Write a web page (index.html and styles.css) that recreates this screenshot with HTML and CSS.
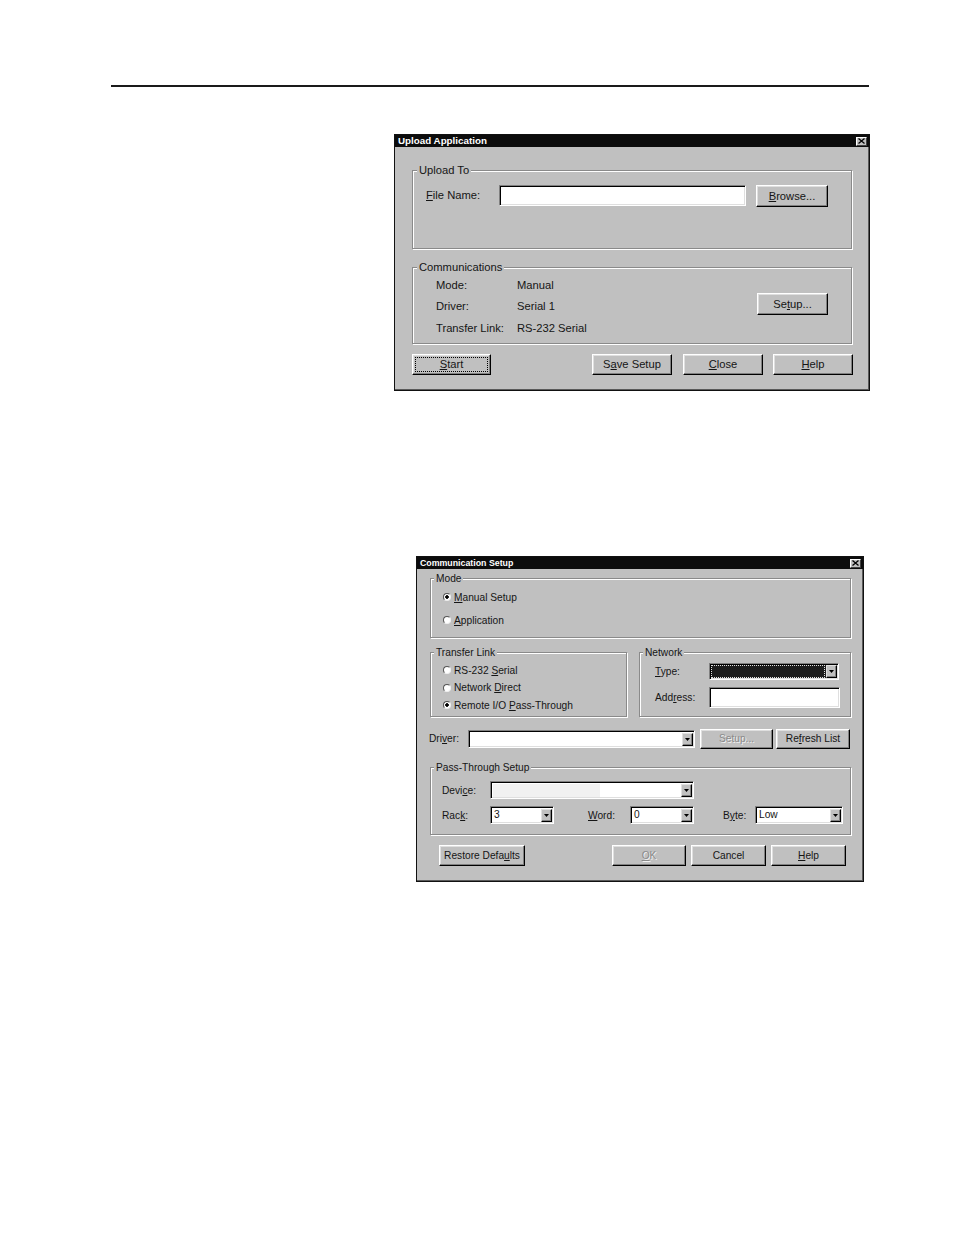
FILE: index.html
```html
<!DOCTYPE html>
<html>
<head>
<meta charset="utf-8">
<title>Upload Application</title>
<link rel="stylesheet" href="styles.css">
</head>
<body>
<div class="page">
  <div class="rule"></div>

  <div class="dlg dlg-upload">
    <div class="titlebar">
      <span class="title t1">Upload Application</span>
      <span class="xbtn x1"><svg width="7" height="6" viewBox="0 0 7 6"><path d="M0.5 0.5L6.5 5.5M6.5 0.5L0.5 5.5" stroke="#000" stroke-width="1.3"/></svg></span>
    </div>
    <div class="body1">
      <div class="group g-upload">
        <div class="legend">Upload To</div>
        <div class="file-row">
          <span class="lbl-file"><u>F</u>ile Name:</span>
          <span class="edit file-edit"></span>
          <span class="btn btn-browse"><u>B</u>rowse...</span>
        </div>
      </div>

      <div class="group g-comm">
        <div class="legend">Communications</div>
        <div class="comm-body">
          <div class="info-grid">
            <span>Mode:</span><span>Manual</span>
            <span>Driver:</span><span>Serial 1</span>
            <span>Transfer Link:</span><span>RS-232 Serial</span>
          </div>
          <span class="btn btn-setup1">Se<u>t</u>up...</span>
        </div>
      </div>

      <div class="btnrow1">
        <span class="btn b1 focused"><u>S</u>tart</span>
        <div class="btn-right1">
          <span class="btn b1w">S<u>a</u>ve Setup</span>
          <span class="btn b1w g11"><u>C</u>lose</span>
          <span class="btn b1w g10"><u>H</u>elp</span>
        </div>
      </div>
    </div>
  </div>

  <div class="dlg dlg-comm">
    <div class="titlebar">
      <span class="title t2">Communication Setup</span>
      <span class="xbtn x2"><svg width="7" height="6" viewBox="0 0 7 6"><path d="M0.5 0.5L6.5 5.5M6.5 0.5L0.5 5.5" stroke="#000" stroke-width="1.3"/></svg></span>
    </div>
    <div class="body2">
      <div class="group2 g-mode">
        <div class="legend2">Mode</div>
        <div class="mode-radios">
          <div class="radio-row"><span class="radio checked"></span><span><u>M</u>anual Setup</span></div>
          <div class="radio-row r2"><span class="radio"></span><span><u>A</u>pplication</span></div>
        </div>
      </div>

      <div class="row-groups">
        <div class="group2 g-transfer">
          <div class="legend2">Transfer Link</div>
          <div class="transfer-radios">
            <div class="radio-row"><span class="radio"></span><span>RS-232 <u>S</u>erial</span></div>
            <div class="radio-row"><span class="radio"></span><span>Network <u>D</u>irect</span></div>
            <div class="radio-row"><span class="radio checked"></span><span>Remote I/O <u>P</u>ass-Through</span></div>
          </div>
        </div>
        <div class="group2 g-network">
          <div class="legend2">Network</div>
          <div class="net-row">
            <span class="net-lbl"><u>T</u>ype:</span>
            <span class="combo c-type"><span class="combo-text type-text"></span><span class="drop"><svg width="5" height="3" viewBox="0 0 5 3"><path d="M0 0h5L2.5 3z" fill="#000"/></svg></span></span>
          </div>
          <div class="net-row nr2">
            <span class="net-lbl">Add<u>r</u>ess:</span>
            <span class="edit addr-edit"></span>
          </div>
        </div>
      </div>

      <div class="driver-row">
        <span class="drv-lbl">Dri<u>v</u>er:</span>
        <span class="combo c-driver"><span class="combo-text"></span><span class="drop"><svg width="5" height="3" viewBox="0 0 5 3"><path d="M0 0h5L2.5 3z" fill="#000"/></svg></span></span>
        <span class="btn btn-setup2 disabled">Setup...</span>
        <span class="btn btn-refresh">Re<u>f</u>resh List</span>
      </div>

      <div class="group2 g-pass">
        <div class="legend2">Pass-Through Setup</div>
        <div class="pass-row">
          <span class="pass-lbl">Devi<u>c</u>e:</span>
          <span class="combo c-device"><span class="combo-text device-text"></span><span class="drop"><svg width="5" height="3" viewBox="0 0 5 3"><path d="M0 0h5L2.5 3z" fill="#000"/></svg></span></span>
        </div>
        <div class="pass-row pr2">
          <span class="pass-lbl">Rac<u>k</u>:</span>
          <span class="combo c-small"><span class="combo-text">3</span><span class="drop"><svg width="5" height="3" viewBox="0 0 5 3"><path d="M0 0h5L2.5 3z" fill="#000"/></svg></span></span>
          <span class="word-lbl"><u>W</u>ord:</span>
          <span class="combo c-small"><span class="combo-text">0</span><span class="drop"><svg width="5" height="3" viewBox="0 0 5 3"><path d="M0 0h5L2.5 3z" fill="#000"/></svg></span></span>
          <span class="byte-lbl">B<u>y</u>te:</span>
          <span class="combo c-byte"><span class="combo-text">Low</span><span class="drop"><svg width="5" height="3" viewBox="0 0 5 3"><path d="M0 0h5L2.5 3z" fill="#000"/></svg></span></span>
        </div>
      </div>

      <div class="btnrow2">
        <span class="btn b-restore">Restore Defa<u>u</u>lts</span>
        <div class="btn-right2">
          <span class="btn b-ok disabled"><u>O</u>K</span>
          <span class="btn b-cancel">Cancel</span>
          <span class="btn b-cancel"><u>H</u>elp</span>
        </div>
      </div>
    </div>
  </div>
</div>
</body>
</html>
```

FILE: styles.css
```css
* { box-sizing: border-box; }

body {
  margin: 0;
  background: #fff;
  font-family: "Liberation Sans", Arial, sans-serif;
  color: #151515;
}

.page {
  padding-top: 85px;
  min-height: 1235px;
}

.rule {
  margin-left: 111px;
  width: 758px;
  height: 2px;
  background: #1a1a1a;
}

/* Dialog windows */
.dlg {
  background: #c0c0c0;
  border: 1px solid #111;
  box-shadow: inset -1px -1px 0 #5a5a5a;
}

.dlg-upload {
  margin: 47px 0 0 394px;
  width: 476px;
  height: 257px;
  font-size: 11.2px;
}

.dlg-comm {
  margin: 165px 0 0 416px;
  width: 448px;
  height: 326px;
  font-size: 10.2px;
}

.titlebar {
  height: 12px;
  background: #0c0c0c;
  color: #fff;
  display: flex;
  align-items: center;
  justify-content: space-between;
  padding: 0 2px 0 3px;
}

.title {
  font-weight: bold;
  white-space: nowrap;
}

.t1 { font-size: 9.8px; line-height: 12px; }
.t2 { font-size: 8.8px; line-height: 12px; }

.xbtn {
  display: flex;
  align-items: center;
  justify-content: center;
  background: #c0c0c0;
  border: 1px solid;
  border-color: #fff #404040 #404040 #fff;
}

.x1 { width: 11px; height: 9px; }
.x2 { width: 11px; height: 9px; }

/* Group boxes */
.group, .group2 {
  border: 1px solid #8a8a8a;
  box-shadow: inset 1px 1px 0 #fff, 1px 1px 0 #fff;
}

.legend {
  width: fit-content;
  background: #c0c0c0;
  padding: 0 2px;
  height: 13px;
  line-height: 13px;
  margin: -7px 0 0 4px;
  white-space: nowrap;
}

.legend2 {
  width: fit-content;
  background: #c0c0c0;
  padding: 0 2px;
  height: 12px;
  line-height: 12px;
  margin: -6px 0 0 3px;
  white-space: nowrap;
}

/* Controls */
.edit {
  display: block;
  background: #fff;
  border: 1px solid;
  border-color: #808080 #fff #fff #808080;
  box-shadow: inset 1px 1px 0 #000, inset -1px -1px 0 #dfdfdf;
}

.btn {
  display: flex;
  align-items: center;
  justify-content: center;
  background: #c0c0c0;
  border: 1px solid;
  border-color: #fff #000 #000 #fff;
  box-shadow: inset -1px -1px 0 #808080, inset 1px 1px 0 #dfdfdf;
  white-space: nowrap;
  padding-bottom: 1px;
}

.btn.disabled {
  color: #8a8a8a;
  text-shadow: 1px 1px 0 #f2f2f2;
}

.focused {
  outline: 1px dotted #000;
  outline-offset: -4px;
}

.combo {
  display: flex;
  background: #fff;
  border: 1px solid;
  border-color: #808080 #fff #fff #808080;
  box-shadow: inset 1px 1px 0 #000, inset -1px -1px 0 #dfdfdf;
  padding: 2px 1px 1px 2px;
}

.combo-text {
  flex: 1;
  display: flex;
  align-items: center;
  padding-left: 1px;
  line-height: 1;
}

.drop {
  width: 11px;
  display: flex;
  align-items: center;
  justify-content: center;
  background: #c0c0c0;
  border: 1px solid;
  border-color: #dfdfdf #000 #000 #dfdfdf;
  box-shadow: inset -1px -1px 0 #808080;
}

.radio {
  width: 8px;
  height: 8px;
  border-radius: 50%;
  border: 1px solid;
  border-color: #555 #eee #eee #555;
  background: #fff;
  flex: none;
}

.radio.checked {
  background: radial-gradient(circle, #000 0 1.5px, #fff 2px);
}

.radio-row {
  display: flex;
  align-items: center;
  gap: 3px;
  height: 14px;
  white-space: nowrap;
}

/* Upload dialog body */
.body1 {
  padding: 23px 0 0 17px;
}

.g-upload {
  width: 440px;
  height: 79px;
}

.file-row {
  display: flex;
  align-items: flex-start;
  margin: 8px 0 0 13px;
}

.lbl-file {
  width: 73px;
  line-height: 20px;
}

.file-edit {
  width: 247px;
  height: 21px;
}

.btn-browse {
  width: 72px;
  height: 22px;
  margin-left: 10px;
}

.g-comm {
  width: 440px;
  height: 77px;
  margin-top: 18px;
}

.comm-body {
  display: flex;
  justify-content: space-between;
  align-items: flex-start;
  padding: 0 23px;
}

.info-grid {
  display: grid;
  grid-template-columns: 81px auto;
  grid-auto-rows: 21.5px;
  align-items: center;
  white-space: nowrap;
}

.btn-setup1 {
  width: 71px;
  height: 22px;
  margin-top: 19px;
}

.btnrow1 {
  width: 441px;
  display: flex;
  justify-content: space-between;
  margin-top: 10px;
}

.b1 {
  width: 79px;
  height: 21px;
}

.btn-right1 {
  display: flex;
}

.b1w {
  width: 80px;
  height: 21px;
}

.g11 { margin-left: 11px; }
.g10 { margin-left: 10px; }

/* Communication setup dialog body */
.body2 {
  padding: 9px 0 0 13px;
}

.g-mode {
  width: 421px;
  height: 60px;
}

.mode-radios {
  padding-left: 12px;
  margin-top: 5px;
}

.mode-radios .r2 {
  margin-top: 9px;
}

.row-groups {
  display: flex;
  margin-top: 14px;
}

.g-transfer {
  width: 197px;
  height: 65px;
}

.transfer-radios {
  display: flex;
  flex-direction: column;
  gap: 3.5px;
  padding-left: 12px;
  margin-top: 4px;
}

.g-network {
  width: 212px;
  height: 65px;
  margin-left: 12px;
}

.net-row {
  display: flex;
  align-items: center;
  padding-left: 15px;
  margin-top: 4px;
}

.net-row.nr2 {
  margin-top: 7px;
}

.net-lbl {
  width: 54px;
  white-space: nowrap;
}

.c-type {
  width: 130px;
  height: 17px;
  padding: 1px 1px 1px 1px;
  background: #1c1c1c;
}

.type-text {
  background: #1c1c1c;
  border: 1px dotted #e0e0e0;
  margin-right: 1px;
}

.addr-edit {
  width: 131px;
  height: 21px;
}

.driver-row {
  display: flex;
  align-items: flex-start;
  margin-top: 12px;
}

.drv-lbl {
  width: 39px;
  line-height: 19px;
  margin-left: -1px;
}

.c-driver {
  width: 227px;
  height: 18px;
  margin-top: 1px;
}

.btn-setup2 {
  width: 73px;
  height: 20px;
  margin-left: 5px;
}

.btn-refresh {
  width: 74px;
  height: 20px;
  margin-left: 3px;
}

.g-pass {
  width: 421px;
  height: 68px;
  margin-top: 18px;
}

.pass-row {
  display: flex;
  align-items: center;
  padding-left: 11px;
  margin-top: 7px;
  white-space: nowrap;
}

.pass-lbl {
  width: 48px;
}

.c-device {
  width: 204px;
  height: 18px;
}

.device-text {
  background: linear-gradient(to right, #f1f1f1 0 107px, #fff 107px);
}

.c-small {
  width: 64px;
  height: 18px;
}

.word-lbl {
  width: 42px;
  margin-left: 34px;
}

.byte-lbl {
  width: 32px;
  margin-left: 29px;
}

.c-byte {
  width: 88px;
  height: 18px;
}

.btnrow2 {
  width: 407px;
  display: flex;
  justify-content: space-between;
  margin: 10px 0 0 9px;
}

.btn-right2 {
  display: flex;
  gap: 5px;
}

.b-restore {
  width: 86px;
  height: 21px;
}

.b-ok {
  width: 74px;
  height: 21px;
}

.b-cancel {
  width: 75px;
  height: 21px;
}
```
